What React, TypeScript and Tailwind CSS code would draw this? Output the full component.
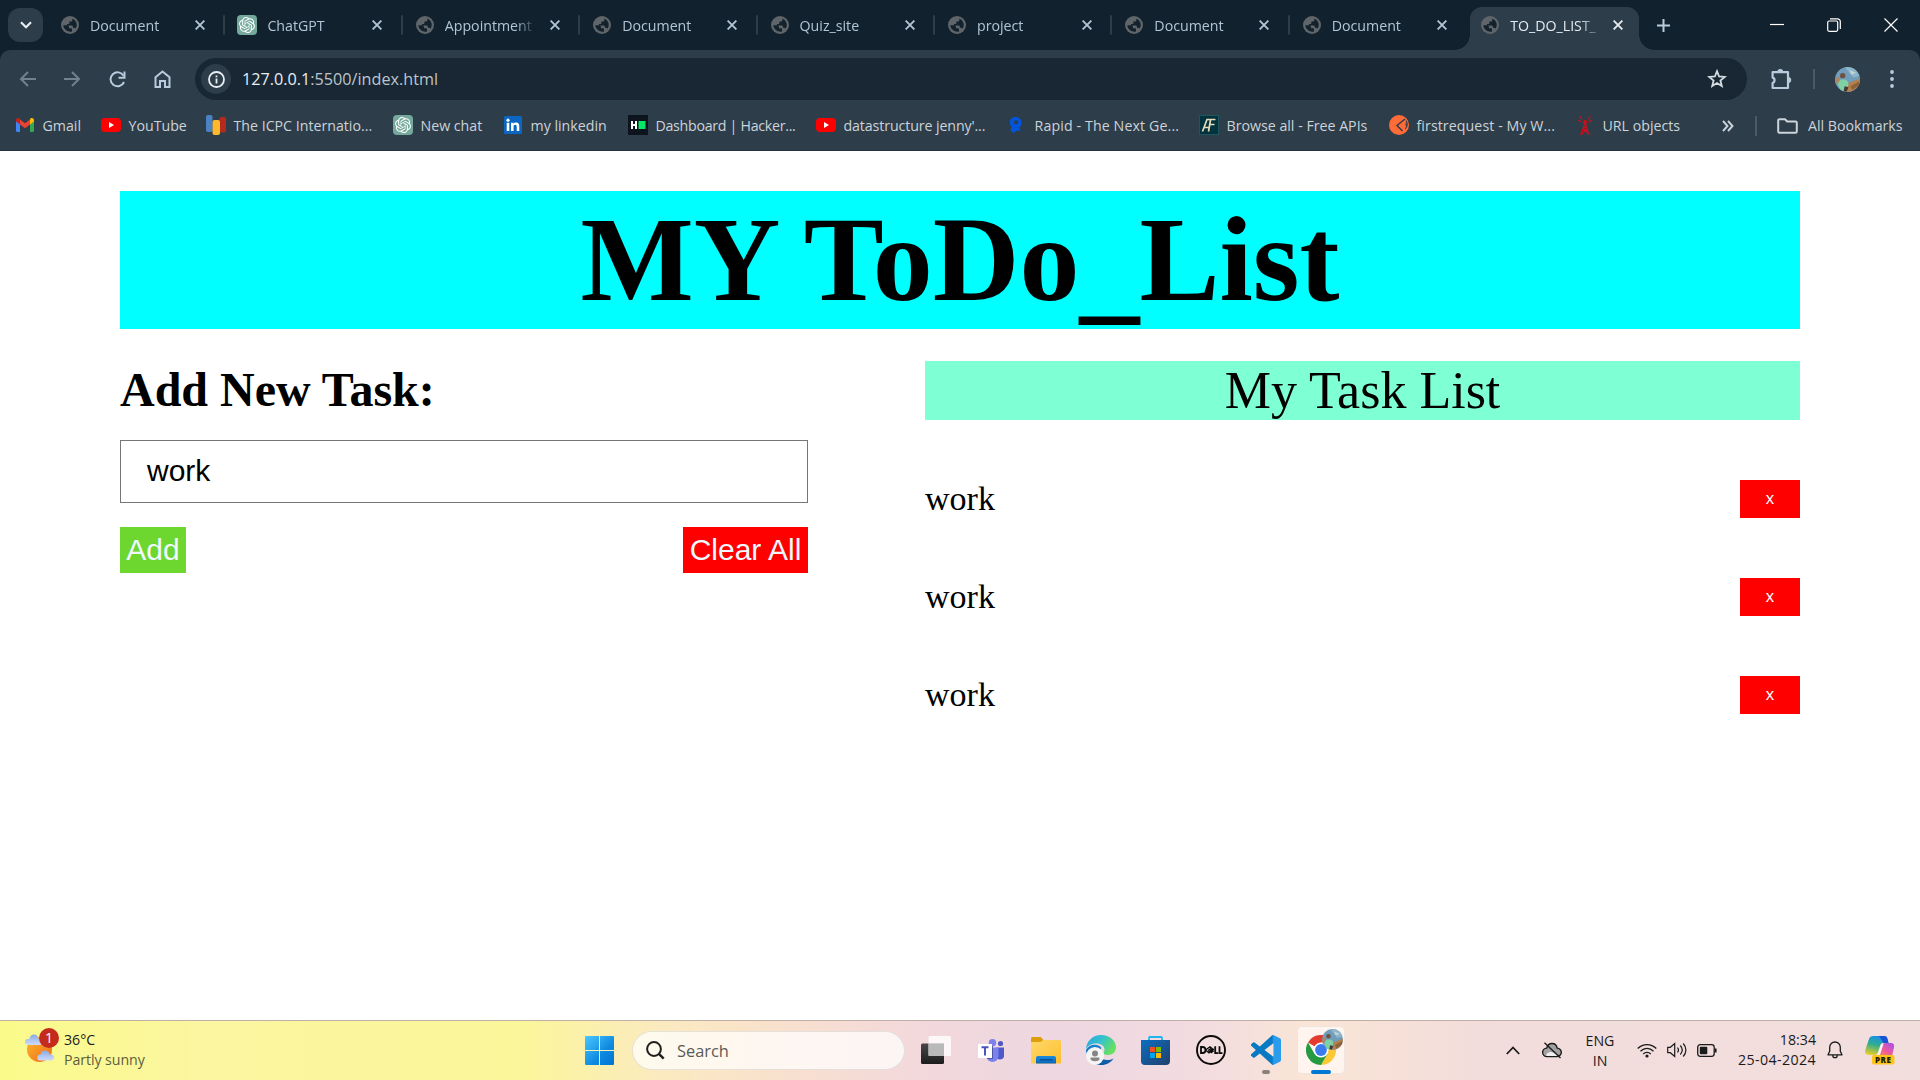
import React from "react";
import { SiOpenai } from "react-icons/si";

type P = { className?: string };

function Globe() {
  return (
    <svg viewBox="0 0 18 18" className="h-[18px] w-[18px] shrink-0">
      <circle cx="9" cy="9" r="9" fill="#5f6569" />
      <path d="M2.2 9.2h3.2c1.8 0 2.6.8 2.6 2v1.1h1.8c.9 0 1.2.5 1.2 1.2v1.9A7 7 0 0 1 2.2 9.2zM11.4 2.5v1.4c0 .9-.6 1.5-1.5 1.5H8.4v1.5c0 .7-.4 1-1 1H6v1.5h4.400c1 0 1.500.7 1.500 1.500v.9h1.100c.8 0 1.300.3 1.600.9a7 7 0 0 0-3.200-10.200z" fill="#13222d" />
    </svg>
  );
}

function ChatGpt() {
  return (
    <span className="flex h-5 w-5 shrink-0 items-center justify-center rounded-[4px] bg-[#74a99b] text-white">
      <SiOpenai className="h-4 w-4" />
    </span>
  );
}

function Gmail() {
  return (
    <svg viewBox="0 0 20 20" className="h-5 w-5 shrink-0">
      <path d="M1 6v9.500c0 .8.600 1.500 1.500 1.500H5V8.800z" fill="#4285f4" />
      <path d="M19 6v9.500c0 .8-.6 1.500-1.500 1.500H15V8.800z" fill="#34a853" />
      <path d="M15 4.500v5l4-3V5.200c0-1.900-2.100-2.800-3.500-1.700z" fill="#fbbc04" />
      <path d="M5 9.500v-5l5 3.800 5-3.800v5l-5 3.800z" fill="#ea4335" />
      <path d="M1 5.200v1.300l4 3v-5l-.500-1C3.100 2.400 1 3.300 1 5.200z" fill="#c5221f" />
    </svg>
  );
}

function YouTube() {
  return (
    <svg viewBox="0 0 20 20" className="h-5 w-5 shrink-0">
      <rect x="0" y="3" width="20" height="14" rx="4" fill="#f00" />
      <path d="M8 7v6l5-3z" fill="#fff" />
    </svg>
  );
}

function Icpc() {
  return (
    <svg viewBox="0 0 20 20" className="h-5 w-5 shrink-0">
      <rect x="0" y="0" width="6.500" height="17" rx="2" fill="#4b82c3" />
      <rect x="13.500" y="2" width="6.500" height="15.500" rx="2" fill="#b52a1c" />
      <rect x="6.500" y="5" width="7.500" height="15" rx="2" fill="#fdb92e" />
    </svg>
  );
}

function LinkedIn() {
  return (
    <svg viewBox="0 0 20 20" className="h-5 w-5 shrink-0">
      <rect x="1" y="1" width="18" height="18" rx="1.500" fill="#0a66c2" />
      <circle cx="5" cy="5.200" r="1.600" fill="#fff" />
      <path d="M3.700 7.800h2.600V16H3.700zM8 7.800h2.500v1.100c.5-.8 1.400-1.300 2.600-1.300 2.300 0 3.200 1.400 3.200 3.800V16h-2.600v-4.100c0-1.200-.3-2.100-1.500-2.100-1.100 0-1.600.8-1.600 2.100V16H8z" fill="#fff" />
    </svg>
  );
}

function HackerRank() {
  return (
    <svg viewBox="0 0 20 20" className="h-5 w-5 shrink-0">
      <rect width="20" height="20" fill="#0e141e" />
      <path d="M3 6h2v3h2V6h2v8H7v-3H5v3H3z" fill="#fff" />
      <rect x="10.500" y="6" width="7" height="8" fill="#05e768" />
    </svg>
  );
}

function Rapid() {
  return (
    <svg viewBox="0 0 20 20" className="h-5 w-5 shrink-0">
      <path d="M8.500 2C5 2 2.800 4.300 2.800 7.500c0 2 .8 3.600 2.200 4.600-1 .8-1.500 2-1.300 3.400.6 1.600 2.800 2.500 4.300 1.500l1.300-1.200 4.700-.2-1.800-2.800C13.700 11.700 14.500 9.800 14.500 7.500 14.500 4.300 12 2 8.500 2z" fill="#0055da" />
      <circle cx="9" cy="7.300" r="2" fill="#2e3d4a" />
    </svg>
  );
}

function FreeApis() {
  return (
    <svg viewBox="0 0 20 20" className="h-5 w-5 shrink-0">
      <rect x=".5" y=".5" width="19" height="19" fill="#02323e" stroke="#1d565d" />
      <path d="M3.500 16.500L8 4.500h8.500M11.500 5L9.500 16.500M4.500 12.500h6.500M10.500 9.500h5" fill="none" stroke="#e8dcb8" strokeWidth="1.700" />
    </svg>
  );
}

function Postman() {
  return (
    <svg viewBox="0 0 20 20" className="h-5 w-5 shrink-0">
      <circle cx="10" cy="10" r="10" fill="#ff6c37" />
      <path d="M16 4L8 10.500l5.500 5.500" fill="none" stroke="#2e3d4a" strokeWidth="1.500" />
      <path d="M17 5.500c1.800 2.300 1.800 6-.8 8.300" fill="none" stroke="#2e3d4a" strokeWidth="1.100" />
      <path d="M17.200 7.500v3.500" stroke="#2e3d4a" strokeWidth="1.200" />
    </svg>
  );
}

function Tower() {
  return (
    <svg viewBox="0 0 20 20" className="h-5 w-5 shrink-0" fill="none" stroke="#c8101c" strokeWidth="1.200">
      <path d="M10 7L6.500 19M10 7l3.500 12M7.800 14.500h4.400M7 18l5.500-3.500M8.200 14l3-3M13 18l-5-4M5 18.800h3M12 18.800h3" />
      <circle cx="10" cy="7" r="1.500" fill="#c8101c" />
      <path d="M7 4.500L4.500 1M13 4.500L15.500 1M6.500 7L2.800 5M13.500 7l3.700-2" strokeWidth="1.100" />
    </svg>
  );
}

function Close({ className = "" }: P) {
  return (
    <svg viewBox="0 0 10 10" className={`h-[10px] w-[10px] shrink-0 ${className}`} fill="none" stroke="currentColor" strokeWidth="1.900">
      <path d="M.6.6l8.800 8.800M9.400.6L.6 9.400" />
    </svg>
  );
}

function Avatar({ className = "" }: P) {
  return (
    <svg viewBox="0 0 26 26" className={className}>
      <clipPath id="av"><circle cx="13" cy="13" r="13" /></clipPath>
      <g clipPath="url(#av)">
        <rect width="26" height="26" fill="#6f9dbb" />
        <path d="M10 0h16v9l-7 2-5-6z" fill="#8db4c9" />
        <path d="M15 3l7 3-5 2z" fill="#c5d3d6" />
        <path d="M13 17l13-5v14H13z" fill="#b1814f" />
        <path d="M16 20l9-5v4l-7 5z" fill="#8e6239" />
        <path d="M0 12l5-2v6l-5 2z" fill="#a88766" />
        <path d="M3 18c1-5 4-5 6-5 3 0 5 2 5 5l-2 7H6z" fill="#7fd0a4" />
        <circle cx="8" cy="9" r="2.800" fill="#70503f" />
        <path d="M10 20l4 1-2 5-3-1z" fill="#473832" />
      </g>
    </svg>
  );
}

const tabs = [
  { title: "Document" },
  { title: "ChatGPT", gpt: true },
  { title: "Appointment" },
  { title: "Document" },
  { title: "Quiz_site" },
  { title: "project" },
  { title: "Document" },
  { title: "Document", last: true },
];

function TabTitle({ children }: { children: React.ReactNode }) {
  return (
    <span className="mt-[2px] ml-[11px] w-[90px] shrink-0 whitespace-nowrap [mask-image:linear-gradient(to_right,black_70px,transparent_92px)]">
      {children}
    </span>
  );
}

function TabStrip() {
  return (
    <div className="flex h-[50px] bg-[#11212d] text-[14.200px] text-[#b3c5d5]">
      <div className="mt-2 ml-2 flex h-[34px] w-[35px] shrink-0 items-center justify-center rounded-[12px] bg-[#2e3d4a] text-[#e6edf3]">
        <svg viewBox="0 0 12 8" className="h-[8px] w-[12px]" fill="none" stroke="currentColor" strokeWidth="2.200"><path d="M1 1.200l5 5 5-5" /></svg>
      </div>
      <div className="ml-1 flex">
        {tabs.map((t, i) => (
          <div key={i} className="flex w-[177.400px] shrink-0 items-center">
            <div className="ml-[14px] flex w-[18px] justify-center">{t.gpt ? <ChatGpt /> : <Globe />}</div>
            <TabTitle>{t.title}</TabTitle>
            <Close className="ml-[15px]" />
            {!t.last && <div className="mr-[-1px] ml-auto h-[20px] w-[2px] rounded bg-[#2e3d4a]" />}
          </div>
        ))}
      </div>
      <div className="relative mt-[7px] ml-[4px] flex h-[43px] w-[169px] shrink-0 items-center rounded-t-[12px] bg-[#2e3d4a] pb-[7px] text-[#e3eaf0]">
        <div className="absolute bottom-0 -left-[15px] h-[15px] w-[15px] bg-[radial-gradient(circle_at_0_0,transparent_14.500px,#2e3d4a_15px)]" />
        <div className="absolute -right-[15px] bottom-0 h-[15px] w-[15px] bg-[radial-gradient(circle_at_100%_0,transparent_14.500px,#2e3d4a_15px)]" />
        <div className="ml-[11px]"><Globe /></div>
        <TabTitle>TO_DO_LIST_</TabTitle>
        <Close className="ml-[13px]" />
      </div>
      <svg viewBox="0 0 13 13" className="mt-[18.500px] ml-[18px] h-[13px] w-[13px]" stroke="#b9cbdc" strokeWidth="2"><path d="M6.500 0v13M0 6.500h13" /></svg>
      <div className="mr-[22px] ml-auto flex items-center gap-[43px] text-white">
        <svg viewBox="0 0 14 14" className="h-[14px] w-[14px]" stroke="currentColor" strokeWidth="1.200"><path d="M0 6.500h14" /></svg>
        <svg viewBox="0 0 14 14" className="h-[14px] w-[14px]" fill="none" stroke="currentColor" strokeWidth="1.200"><rect x=".7" y="3" width="10" height="10.300" rx="1.500" /><path d="M3 .8h7.500a2.800 2.800 0 0 1 2.800 2.800V11" /></svg>
        <svg viewBox="0 0 14 14" className="h-[14px] w-[14px]" stroke="currentColor" strokeWidth="1.200"><path d="M.5.5l13 13M13.500.5l-13 13" /></svg>
      </div>
    </div>
  );
}

function Toolbar() {
  return (
    <div className="flex h-[51px] items-start bg-[#2e3d4a] pt-2 text-[#b9cbdc]">
      <div className="ml-[19px] flex h-[42px] items-center">
        <svg viewBox="0 0 17 16" className="h-[16px] w-[17px]" fill="none" stroke="#71818e" strokeWidth="2"><path d="M17 8H2M9 1L2 8l7 7" /></svg>
        <svg viewBox="0 0 17 16" className="ml-[28px] h-[16px] w-[17px]" fill="none" stroke="#71818e" strokeWidth="2"><path d="M0 8h15M8 1l7 7-7 7" /></svg>
        <svg viewBox="0 0 17 17" className="ml-[28px] h-[17px] w-[17px]" fill="none" stroke="currentColor" strokeWidth="2"><path d="M14.600 4.800A7 7 0 1 0 15 11" /><path d="M15.500 .500v6.200H9.500" /></svg>
        <svg viewBox="0 0 17 18" className="ml-[28px] h-[18px] w-[17px]" fill="none" stroke="currentColor" strokeWidth="2"><path d="M1.500 7.200L8.500 1.500l7 5.700V17h-4.500v-6H6v6H1.500z" /></svg>
      </div>
      <div className="ml-[24px] flex h-[42px] w-[1552px] items-center rounded-full bg-[#182733]">
        <div className="ml-[6px] flex h-[30px] w-[30px] items-center justify-center rounded-full bg-[#2e3d4a]">
          <svg viewBox="0 0 17 17" className="h-[17px] w-[17px]" fill="none" stroke="#e8eef3" strokeWidth="1.800"><circle cx="8.500" cy="8.500" r="7.500" /><path d="M8.500 7.500V12.500M8.500 4.400v1.900" /></svg>
        </div>
        <div className="mt-px ml-[11px] text-[16.200px] text-[#bcc5cc]"><span className="text-[#e9eef2]">127.0.0.1</span>:5500/index.html</div>
        <svg viewBox="0 0 20 20" className="mr-[20px] ml-auto h-[20px] w-[20px]" fill="none" stroke="#d4dbe1" strokeWidth="1.800"><path d="M10 2.200l2.100 5.300 5.700.4-4.400 3.600 1.400 5.600-4.800-3.100-4.800 3.100 1.400-5.600-4.400-3.600 5.700-.4z" /></svg>
      </div>
      <div className="flex h-[42px] items-center">
        <svg viewBox="0 0 22 22" className="ml-[23px] h-[22px] w-[22px]" fill="none" stroke="currentColor" strokeWidth="2.200"><path d="M2.600 4.200H18V20H2.600v-5.200a2.700 2.700 0 0 0 0-5.200z" strokeLinejoin="round" /><path d="M7.600 4a2.700 2.700 0 0 1 5.400 0zM18.200 9.300a2.700 2.700 0 0 1 0 5.400z" fill="currentColor" strokeWidth=".8" /></svg>
        <div className="ml-[21px] h-[20px] w-[2px] bg-[#4a5a68]" />
        <Avatar className="ml-[20px] h-[25px] w-[25px]" />
        <svg viewBox="0 0 4 18" className="ml-[30px] h-[18px] w-[4px]" fill="currentColor"><circle cx="2" cy="2" r="1.900" /><circle cx="2" cy="9" r="1.900" /><circle cx="2" cy="16" r="1.900" /></svg>
      </div>
    </div>
  );
}

const bookmarks = [
  { icon: Gmail, text: "Gmail", w: "w-[86px]" },
  { icon: YouTube, text: "YouTube", w: "w-[105px]" },
  { icon: Icpc, text: "The ICPC Internatio...", w: "w-[187px]" },
  { icon: ChatGpt, text: "New chat", w: "w-[110px]" },
  { icon: LinkedIn, text: "my linkedin", w: "w-[125px]" },
  { icon: HackerRank, text: "Dashboard | Hacker...", w: "w-[188px] tracking-[-0.28px]" },
  { icon: YouTube, text: "datastructure jenny'...", w: "w-[191px] tracking-[-0.1px]" },
  { icon: Rapid, text: "Rapid - The Next Ge...", w: "w-[192px] tracking-[0.12px]" },
  { icon: FreeApis, text: "Browse all - Free APIs", w: "w-[190px]" },
  { icon: Postman, text: "firstrequest - My W...", w: "w-[186px] tracking-[0.08px]" },
  { icon: Tower, text: "URL objects", w: "w-[147px]" },
];

function Bookmarks() {
  return (
    <div className="flex h-[50px] items-center border-b border-[#223240] bg-[#2e3d4a] pl-[15px] text-[14.200px] text-[#ccd3d9]">
      {bookmarks.map(({ icon: Icon, text, w }) => (
        <div key={text} className={`flex shrink-0 items-center gap-[7.500px] whitespace-nowrap ${w}`}>
          <Icon />
          <span>{text}</span>
        </div>
      ))}
      <svg viewBox="0 0 12 12" className="h-[12px] w-[12px] shrink-0" fill="none" stroke="currentColor" strokeWidth="1.900"><path d="M1 1l4.500 5L1 11M6 1l4.500 5L6 11" /></svg>
      <div className="ml-[21px] h-[20px] w-[2px] shrink-0 bg-[#4a5a68]" />
      <svg viewBox="0 0 21 16" className="ml-[20px] h-[16px] w-[21px] shrink-0" fill="none" stroke="currentColor" strokeWidth="2" strokeLinejoin="round"><path d="M1.200 13.500V2.500a1.300 1.300 0 0 1 1.300-1.300H8l2.200 2.300h8.300a1.300 1.300 0 0 1 1.300 1.300v8.700a1.300 1.300 0 0 1-1.300 1.300h-16a1.300 1.300 0 0 1-1.300-1.300z" /></svg>
      <span className="ml-[10px] whitespace-nowrap">All Bookmarks</span>
    </div>
  );
}

function Page() {
  return (
    <div className="h-[869px] bg-white px-[120px] pt-[40px] font-['Liberation_Serif',serif] text-black">
      <h1 className="h-[138px] bg-[#00ffff] text-center text-[120px] leading-[138px] font-bold">MY ToDo<span className="relative top-[8px]">_</span>List</h1>
      <div className="mt-8 flex justify-between">
        <div className="w-[688px]">
          <h2 className="h-[55px] text-[48px] leading-[57px] font-bold">Add New Task:</h2>
          <div className="mt-[24px] flex h-[63px] items-center border border-[#767676] pb-[2px] pl-[26px] font-['Liberation_Sans',sans-serif] text-[30px]">work</div>
          <div className="mt-[24px] flex justify-between font-['Liberation_Sans',sans-serif] text-[30px] text-[#f0f8ff]">
            <button className="h-[46px] w-[66px] bg-[#6dd62f] leading-[46px]">Add</button>
            <button className="h-[46px] w-[125px] bg-[#ff0000] leading-[46px] whitespace-nowrap">Clear All</button>
          </div>
        </div>
        <div className="w-[875px]">
          <div className="h-[59px] bg-[#7fffd4] text-center text-[52px] leading-[59px]">My Task List</div>
          <div className="mt-[60px] flex flex-col gap-[60px]">
            {[0, 1, 2].map((i) => (
              <div key={i} className="flex h-[38px] items-center justify-between text-[34px] leading-[38px]">
                <span>work</span>
                <button className="h-[38px] w-[60px] bg-[#ff0000] font-['Liberation_Sans',sans-serif] text-[16.700px] leading-[38px] text-white">x</button>
              </div>
            ))}
          </div>
        </div>
      </div>
    </div>
  );
}

function Weather() {
  return (
    <svg viewBox="0 0 36 36" className="h-9 w-9">
      <defs>
        <linearGradient id="sun" x1="0" y1="0" x2="1" y2="1"><stop offset="0" stopColor="#fbb92c" /><stop offset="1" stopColor="#f0681a" /></linearGradient>
        <linearGradient id="cl" x1="0" y1="0" x2="0" y2="1"><stop offset="0" stopColor="#8aa9e6" /><stop offset="1" stopColor="#cfdcf8" /></linearGradient>
      </defs>
      <circle cx="14.500" cy="21.500" r="12.500" fill="url(#sun)" />
      <path d="M3 17a3 3 0 0 1 0-6c.5 0 .9 0 1.300.2C4.800 8 6.600 6.500 9 6.500c2.600 0 4.300 2 4.700 4.500 2 0 3.300 1.300 3.300 3s-1.300 3-3 3z" fill="url(#cl)" />
      <path d="M15 32.500a3 3 0 0 1 .5-6c.6-2.600 2.300-4 4.500-4s4.200 1.400 4.800 4c2.700-.1 4.200 1.200 4.200 3s-1.400 3-3.500 3z" fill="url(#cl)" />
      <circle cx="24" cy="10" r="10" fill="#c42b1c" />
      <text x="24" y="15" textAnchor="middle" fontSize="14" fill="#fff" fontFamily="Open Sans">1</text>
    </svg>
  );
}

function Windows() {
  return (
    <svg viewBox="0 0 29 29" className="h-[29px] w-[29px]">
      <defs><linearGradient id="win" x1="0" y1="0" x2="1" y2="1"><stop offset="0" stopColor="#4cc8ff" /><stop offset=".6" stopColor="#0d8ae0" /><stop offset="1" stopColor="#0173d4" /></linearGradient></defs>
      <path d="M1 0h13v14H0V1a1 1 0 0 1 1-1zM15 0h13a1 1 0 0 1 1 1v13H15zM0 15h14v14H1a1 1 0 0 1-1-1zM15 15h14v13a1 1 0 0 1-1 1H15z" fill="url(#win)" />
    </svg>
  );
}

function TaskView() {
  return (
    <svg viewBox="0 0 30 28" className="h-[28px] w-[30px]">
      <defs><linearGradient id="tv" x1="0" y1="0" x2="0" y2="1"><stop offset="0" stopColor="#474747" /><stop offset="1" stopColor="#1c1c1c" /></linearGradient></defs>
      <rect x="0" y="7.500" width="23" height="20.500" rx="1.500" fill="url(#tv)" />
      <rect x="7.500" y="0" width="22.500" height="20" rx="1.500" fill="#fff" opacity=".8" />
      <rect x="7.500" y="7.500" width="15.500" height="12.500" fill="#b9b9b9" />
    </svg>
  );
}

function Teams() {
  return (
    <svg viewBox="0 0 26 23" className="h-[23px] w-[26px]">
      <circle cx="22.500" cy="4.500" r="2.600" fill="#5059c9" />
      <path d="M18 8.500h8V16a4 4 0 0 1-8 1z" fill="#5059c9" />
      <circle cx="14.500" cy="3.700" r="3.700" fill="#7b83eb" />
      <path d="M8.500 8.500h12V17a6 6 0 0 1-12 0z" fill="#7b83eb" />
      <path d="M9 7h6v13H9z" fill="#3c448f" opacity=".7" />
      <rect x="0" y="5" width="14" height="14" fill="#fff" />
      <path d="M3.500 8.200h7M7 8.200v8.300" stroke="#4b53bc" strokeWidth="2" />
    </svg>
  );
}

function Folder() {
  return (
    <svg viewBox="0 0 30 27" className="h-[27px] w-[30px]">
      <defs><linearGradient id="fo" x1="0" y1="0" x2="1" y2="1"><stop offset="0" stopColor="#ffd86b" /><stop offset="1" stopColor="#fdbf2d" /></linearGradient><linearGradient id="fb" x1="0" y1="0" x2="0" y2="1"><stop offset="0" stopColor="#1a8be0" /><stop offset="1" stopColor="#0a66b8" /></linearGradient></defs>
      <path d="M0 1.500A1.500 1.500 0 0 1 1.500 0h8.300l3 3.500-3 3H0z" fill="#dd9f0b" />
      <path d="M0 5h9.500l3-2H28.500A1.500 1.500 0 0 1 30 4.500v21a1 1 0 0 1-1 1H1a1 1 0 0 1-1-1z" fill="url(#fo)" />
      <path d="M5 26.500V21a2 2 0 0 1 2-2h16a2 2 0 0 1 2 2v5.500z" fill="url(#fb)" />
      <path d="M9 22.800h12.500" stroke="#07488c" strokeWidth="1.200" />
    </svg>
  );
}

function Edge() {
  return (
    <svg viewBox="0 0 30 30" className="h-[30px] w-[30px]">
      <defs>
        <linearGradient id="e1" x1="0" y1="0" x2="1" y2=".5"><stop offset="0" stopColor="#2aa5dc" /><stop offset=".5" stopColor="#35c1d0" /><stop offset="1" stopColor="#66e05f" /></linearGradient>
        <linearGradient id="e2" x1="0" y1="0" x2="0" y2="1"><stop offset="0" stopColor="#1681cf" /><stop offset="1" stopColor="#0c59a4" /></linearGradient>
      </defs>
      <path d="M0 15C.3 21 3 30 15.500 30c5 0 9.500-2.500 12-6.500-6 3-11 1.500-13-2-2-4-1-7 1-8.500C12 8 3 9 0 15z" fill="url(#e2)" />
      <path d="M0 15C0 6 7 0 15 0c9 0 15 6 15 12.500 0 4.500-3.500 7.500-8 7.500-3 0-4.500-1-4.500-2 0-.8 1-1.500 1-3.500C18.500 11 15 8.500 10.500 8.500 5 8.500 1 11 0 15z" fill="url(#e1)" />
      <circle cx="9" cy="21" r="9" fill="#f5f5f5" />
      <circle cx="9" cy="18.500" r="3" fill="#858585" />
      <path d="M4.500 23.500c0-.6.400-1 1-1h7c.6 0 1 .4 1 1 0 1.700-1.500 2.800-4.500 2.800s-4.500-1.100-4.500-2.800z" fill="#858585" />
    </svg>
  );
}

function Store() {
  return (
    <svg viewBox="0 0 29 29" className="h-[29px] w-[29px]">
      <defs><linearGradient id="st" x1="0" y1="0" x2="1" y2="1"><stop offset="0" stopColor="#0b6fc1" /><stop offset="1" stopColor="#223f6b" /></linearGradient></defs>
      <path d="M8 5V2a1 1 0 0 1 1-1h11a1 1 0 0 1 1 1v3" fill="none" stroke="#22b4ee" strokeWidth="1.800" />
      <path d="M0 4h29v21a4 4 0 0 1-4 4H4a4 4 0 0 1-4-4z" fill="url(#st)" />
      <path d="M9 11h5v5H9z" fill="#f25022" /><path d="M15 11h5v5h-5z" fill="#7fba00" /><path d="M9 17h5v5H9z" fill="#00a4ef" /><path d="M15 17h5v5h-5z" fill="#ffb900" />
    </svg>
  );
}

function Dell() {
  return (
    <svg viewBox="0 0 30 30" className="h-[30px] w-[30px]" fill="none" stroke="#0c0c0c">
      <circle cx="15" cy="15" r="14" strokeWidth="1.900" />
      <path d="M5 12v6h1.500a3 3 0 0 0 0-6zM19.200 11.300v6.900h3M23.500 11.300v6.900h3" strokeWidth="1.800" />
      <path d="M9.500 15l4.500-3.300 1.500 1.200-3.500 2.600M9.500 15l3.500 3 5-4M12.500 17l4.500-3.600M14.800 18l3-2.200" strokeWidth="1.300" />
    </svg>
  );
}

function VsCode() {
  return (
    <svg viewBox="0 0 24 24" className="h-[30px] w-[30px]">
      <defs><linearGradient id="vs" x1="0" y1="0" x2="1" y2="0"><stop offset=".7" stopColor="#0879c3" /><stop offset=".76" stopColor="#2b9cec" /></linearGradient></defs>
      <path d="M23.150 2.587L18.210.21a1.494 1.494 0 0 0-1.705.29l-9.460 8.630-4.120-3.128a.999.999 0 0 0-1.276.057L.327 7.261A1 1 0 0 0 .326 8.740L3.899 12 .326 15.260a1 1 0 0 0 .001 1.479L1.650 17.940a.999.999 0 0 0 1.276.057l4.120-3.128 9.460 8.630a1.492 1.492 0 0 0 1.704.29l4.942-2.377A1.500 1.500 0 0 0 24 20.060V3.939a1.500 1.500 0 0 0-.85-1.352zm-5.146 14.861L10.826 12l7.178-5.448v10.896z" fill="url(#vs)" />
    </svg>
  );
}

function Chrome() {
  return (
    <svg viewBox="0 0 30 30" className="h-[30px] w-[30px]">
      <path d="M15 15L2 7.500A15 15 0 0 1 28 7.500H15z" fill="#e33b2e" />
      <path d="M15 7.500h13A15 15 0 0 1 15 30l6.500-11.200z" fill="#fcc934" />
      <path d="M2 7.500A15 15 0 0 0 15 30l6.500-11.200L15 15l-6.500 3.700z" fill="#249a41" />
      <circle cx="15" cy="15" r="7.500" fill="#fff" />
      <circle cx="15" cy="15" r="5.900" fill="#3a7cf0" />
    </svg>
  );
}

function Copilot() {
  return (
    <svg viewBox="0 0 30 29" className="h-[29px] w-[30px]">
      <defs>
        <linearGradient id="c1" x1=".5" y1="0" x2=".2" y2="1"><stop offset="0" stopColor="#1a8ee8" /><stop offset=".45" stopColor="#2fae8e" /><stop offset="1" stopColor="#f0cf1f" /></linearGradient>
        <linearGradient id="c2" x1="1" y1="0" x2=".2" y2="1"><stop offset="0" stopColor="#a24ff0" /><stop offset=".6" stopColor="#ec5aa0" /><stop offset="1" stopColor="#f98a55" /></linearGradient>
      </defs>
      <path d="M8 0h11c2 0 3 1 3.500 3l1 4h-5c-2 0-3 1-3.500 3l-2 6c-.6 2-2 3-4 3H4c-3 0-4.500-2-3.700-5L4 3c.6-2 2-3 4-3z" fill="url(#c1)" />
      <path d="M14 0h5c2 0 3 1 3.500 3l1 4h-5z" fill="#1b52d8" />
      <path d="M20 7h6c2.500 0 3.600 2 3 4.500L27 20H12c2 0 3-1 3.500-3l2-7c.5-2 1-3 2.500-3z" fill="url(#c2)" />
      <path d="M17.500 8.500L13.500 19" stroke="#fff" strokeWidth="2" opacity=".75" />
      <rect x="7" y="19" width="22.500" height="9.500" rx="2" fill="#fcc419" />
      <text x="18.300" y="26.700" textAnchor="middle" fontSize="8" fontWeight="800" letterSpacing=".6" fontFamily="Open Sans" fill="#221c00">PRE</text>
    </svg>
  );
}

function Taskbar() {
  return (
    <div className="flex h-[60px] border-t border-[#bcb0a6] bg-[linear-gradient(90deg,#fafa8a_0px,#fbf6a0_200px,#fbf69a_520px,#fbeabf_660px,#f8dfd0_800px,#f2d8dc_930px,#eed7e1_1060px,#f2dce0_1200px,#fae5d6_1310px,#f6e0d8_1400px,#f2dcdc_1500px,#f3dede_1920px)] text-[14.200px] text-[#1b1b1b]">
      <div className="flex w-[585px] shrink-0 pt-[7px] pl-[25px]">
        <Weather />
        <div className="mt-[2px] ml-[3px] leading-[20px]">
          <div>36°C</div>
          <div className="tracking-[-0.08px] text-[#5d5d3e]">Partly sunny</div>
        </div>
      </div>
      <div className="flex h-[58px] items-center">
        <Windows />
        <div className="ml-[18px] flex h-[39px] w-[273px] items-center rounded-full border border-[#00000018] bg-[#ffffffb8] pl-[13px]">
          <svg viewBox="0 0 19 19" className="h-[19px] w-[19px]" fill="none" stroke="#1f1f1f" strokeWidth="2"><circle cx="8" cy="8" r="6.900" /><path d="M12.900 12.900l4.800 4.800" strokeWidth="2.500" /></svg>
          <span className="mt-[2px] ml-[12px] text-[16.400px] text-[#5c5a55]">Search</span>
        </div>
        <div className="ml-[16px]"><TaskView /></div>
        <div className="ml-[27px]"><Teams /></div>
        <div className="ml-[27px]"><Folder /></div>
        <div className="ml-[25px]"><Edge /></div>
        <div className="ml-[25px]"><Store /></div>
        <div className="ml-[26px]"><Dell /></div>
        <div className="relative ml-[25px]">
          <VsCode />
          <div className="absolute top-[35px] left-[11px] h-[4px] w-[8px] rounded-full bg-[#8b807b]" />
        </div>
        <div className="relative ml-[16px] flex h-[48px] w-[48px] items-center justify-center rounded-[5px] border border-[#00000010] bg-[#fff5ee]">
          <Chrome />
          <div className="absolute top-[2px] left-[24px]"><Avatar className="h-[21px] w-[21px]" /></div>
          <div className="absolute top-[43px] left-[13px] h-[4px] w-[20px] rounded-full bg-[#0078d4]" />
        </div>
      </div>
      <div className="ml-[161px] flex h-[58px] items-center">
        <svg viewBox="0 0 14 9" className="h-[9px] w-[14px]" fill="none" stroke="currentColor" strokeWidth="1.800"><path d="M.8 8L7 1.500 13.200 8" /></svg>
        <svg viewBox="0 0 20 17" className="ml-[22px] h-[17px] w-[20px]" fill="none" stroke="#1b1b1b" strokeWidth="1.400"><path d="M5 14.500a4.200 4.200 0 0 1-.3-8.400C5.500 3 7.500 1.500 10 1.500s4.600 1.600 5.200 4.600a4.200 4.200 0 0 1-.2 8.400z" fill="#a5a1a1" /><path d="M4 13.500c1-3 4-4.500 8-2.500 2 1 3.500 2 3.500 3H5z" fill="#eee" stroke="none" /><path d="M2.500.8L18.500 16" /></svg>
        <div className="mt-px ml-[18px] w-[40px] text-center leading-[20px]"><div>ENG</div><div>IN</div></div>
        <svg viewBox="0 0 20 15" className="ml-[17px] h-[15px] w-[20px]" fill="none" stroke="currentColor" strokeWidth="1.300"><path d="M.7 5.500c5.300-5.300 13.300-5.300 18.600 0M3.500 8.300c3.800-3.800 9.200-3.800 13 0M6.200 11c2.200-2.200 5.400-2.200 7.600 0" /><circle cx="10" cy="13" r="1.600" fill="currentColor" stroke="none" /></svg>
        <svg viewBox="0 0 20 16" className="ml-[10px] h-[16px] w-[20px]" fill="none" stroke="currentColor" strokeWidth="1.200"><path d="M.7 5.300h2.600L7.700 1.500v13L3.300 10.700H.7zM10.500 5.500c1.200 1.500 1.200 3.500 0 5M13.300 3.500c2.400 2.700 2.400 6.300 0 9M16.200 1.500c3.600 3.900 3.600 9.100 0 13" /></svg>
        <svg viewBox="0 0 20 13" className="ml-[10px] h-[13px] w-[20px]" fill="none" stroke="currentColor" strokeWidth="1.300"><rect x=".7" y=".7" width="16.500" height="11.600" rx="2.500" /><rect x="2.800" y="2.800" width="7.500" height="7.400" rx="1" fill="currentColor" stroke="none" /><path d="M18.600 4.500v4" strokeWidth="2" /></svg>
        <div className="ml-[19px] w-[80px] text-right leading-[20px] whitespace-nowrap"><div>18:34</div><div className="tracking-[0.400px]">25-04-2024</div></div>
        <svg viewBox="0 0 16 18" className="ml-[11px] h-[18px] w-[16px]" fill="none" stroke="currentColor" strokeWidth="1.300"><path d="M8 1a5.300 5.300 0 0 0-5.300 5.300v4L1 13.800h14l-1.700-3.500v-4A5.300 5.300 0 0 0 8 1zM5.800 14.500a2.200 2.200 0 0 0 4.400 0" strokeLinejoin="round" /></svg>
        <div className="ml-[22px]"><Copilot /></div>
      </div>
    </div>
  );
}

export default function App() {
  return (
    <div className="h-[1080px] w-[1920px] overflow-hidden font-['Open_Sans',sans-serif]">
      <div className="bg-[#11212d]">
        <TabStrip />
        <div className="overflow-hidden rounded-t-[10px]">
          <Toolbar />
          <Bookmarks />
        </div>
      </div>
      <Page />
      <Taskbar />
    </div>
  );
}
